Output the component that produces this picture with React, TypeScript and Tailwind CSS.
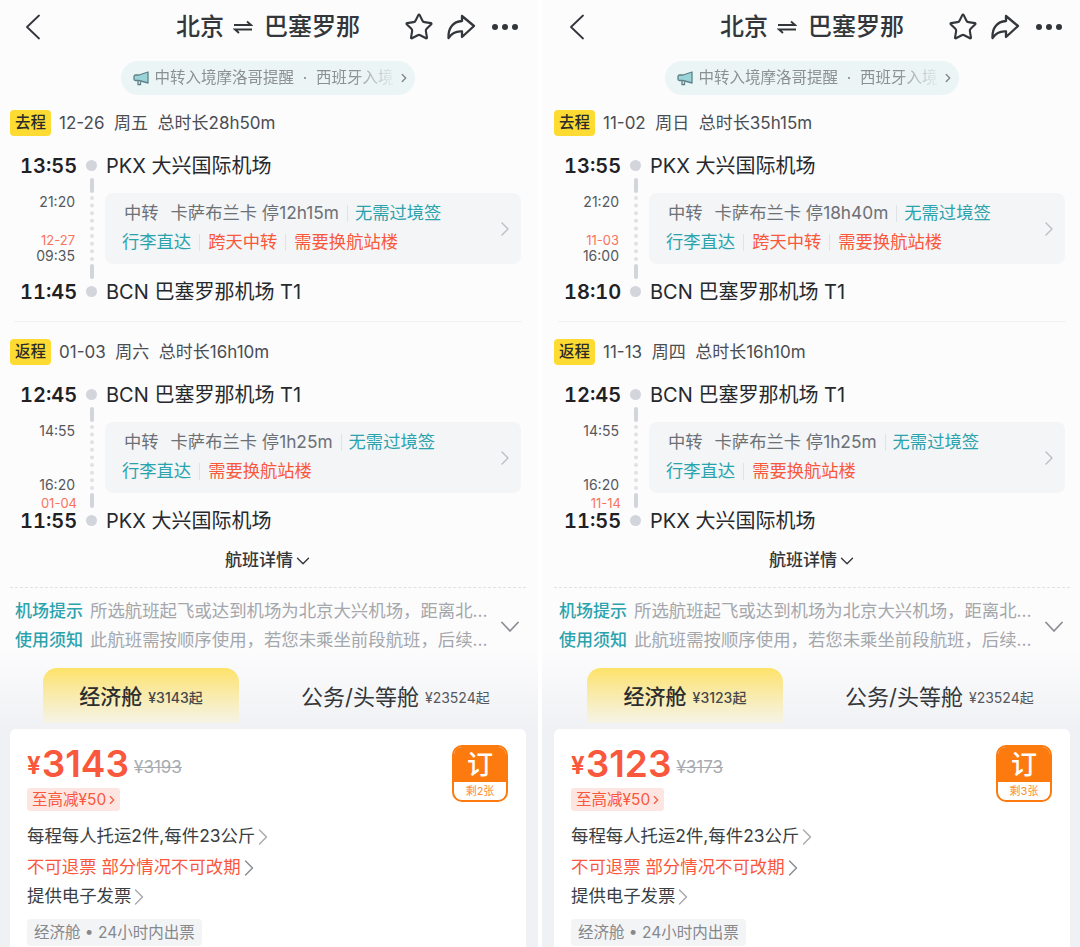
import React from 'react';
import { ChevronRight, ChevronDown, Star } from 'lucide-react';

const FONT = "font-['Inter','Noto_Sans_CJK_SC',sans-serif]";

type Tag = { text: string; color: 'teal' | 'red' };

type Leg = {
  label: string;
  head: string;
  depTime: string;
  depPort: string;
  arrTime: string;
  arrPort: string;
  land: string;
  landDate?: string;
  takeoff: string;
  takeoffDate?: string;
  stop: string;
  stopTag: string;
  tags: Tag[];
};

type PanelData = {
  legs: Leg[];
  econ: string;
  price: string;
  oldPrice: string;
  left: string;
};

const tagColor = { teal: 'text-[#2ba3ad]', red: 'text-[#f9583c]' };

function Divider() {
  return <span className="mx-[8px] h-[17px] w-px bg-[#e0e3e6]" />;
}

function LegBlock({ leg }: { leg: Leg }) {
  return (
    <div className="pl-[11px] pr-[15px]">
      <div className="flex h-[26px] items-center">
        <span className="-ml-px flex h-[26px] w-[41px] items-center justify-center rounded-[4px] bg-[#fedb33] text-[15.5px] font-medium text-[#2b2b2b]">
          {leg.label}
        </span>
        <span className="ml-[8px] whitespace-pre pt-[1px] text-[17px] text-[#4a4d52]">{leg.head}</span>
      </div>

      <div className="mt-[17px] flex h-[25px] items-center">
        <span className="w-[66px] pl-[9px] text-[20px] font-semibold leading-none tabular-nums text-[#1f2124]">{leg.depTime}</span>
        <span className="ml-[9px] h-[11px] w-[11px] rounded-full bg-[#d3d5dc]" />
        <span className="ml-[9px] text-[20px] leading-none text-[#27292c]">{leg.depPort}</span>
      </div>

      <div className="flex h-[101px]">
        <div className="w-[64px] text-right text-[14px] leading-[16px] text-[#55585c]">
          <div className="mt-[16px]">{leg.land}</div>
          {leg.takeoffDate ? (
            <div className="mt-[23px]">
              <div className="text-[13px] leading-[15px] text-[#f9735b]">{leg.takeoffDate}</div>
              <div>{leg.takeoff}</div>
            </div>
          ) : (
            <div className="mt-[38px]">
              <div>{leg.takeoff}</div>
              {leg.landDate && (
                <div className="-mr-[2px] mt-[5px] text-[13px] leading-[11px] text-[#f9735b]">{leg.landDate}</div>
              )}
            </div>
          )}
        </div>
        <div className="ml-[14px] flex w-[5px] flex-col items-center">
          <span className="h-[15px] w-[4px] rounded-full bg-[#d3d5dc]" />
          <span className="mt-[3px] h-[65px] border-l-[4px] border-dotted border-[#dfe1e5]" />
          <span className="mt-[3px] h-[15px] w-[4px] rounded-full bg-[#d3d5dc]" />
        </div>
        <div className="ml-[11px] mt-[15px] flex h-[71px] flex-1 items-center rounded-[8px] bg-[#f3f5f7] pl-[18px] pr-[4px]">
          <div className="flex-1 pb-[2px]">
            <div className="flex h-[28px] items-center text-[17.3px]">
              <span className="ml-[1px] text-[#6d7075]">中转</span>
              <span className="ml-[12px] text-[#6d7075]">{leg.stop}</span>
              <Divider />
              <span className="-ml-[1px] text-[#2ba3ad]">{leg.stopTag}</span>
            </div>
            <div className="-ml-[1px] mt-[1px] flex h-[28px] items-center text-[17.3px]">
              {leg.tags.map((t, i) => (
                <React.Fragment key={t.text}>
                  {i > 0 && <Divider />}
                  <span className={tagColor[t.color]}>{t.text}</span>
                </React.Fragment>
              ))}
            </div>
          </div>
          <ChevronRight className="h-[24px] w-[24px] text-[#b9bcc1]" strokeWidth={1.25} />
        </div>
      </div>

      <div className="flex h-[25px] items-center">
        <span className="w-[66px] pl-[9px] text-[20px] font-semibold leading-none tabular-nums text-[#1f2124]">{leg.arrTime}</span>
        <span className="ml-[9px] h-[11px] w-[11px] rounded-full bg-[#d3d5dc]" />
        <span className="ml-[9px] text-[20px] leading-none text-[#27292c]">{leg.arrPort}</span>
      </div>
    </div>
  );
}

function Panel({ data, side }: { data: PanelData; side: 'left' | 'right' }) {
  return (
    <div
      className={`h-[947px] w-[538px] shrink-0 overflow-hidden bg-[linear-gradient(to_bottom,#fcfcfd_650px,#f0f1f4_730px)] ${FONT} ${
        side === 'left' ? 'pr-[2px]' : 'pl-[2px]'
      }`}
    >
      {/* nav */}
      <div className="flex h-[54px] items-center pl-[25px]">
        <svg width="15" height="26" viewBox="0 0 15 26" fill="none" stroke="#33363a" strokeWidth="1.8" strokeLinecap="round" strokeLinejoin="round">
          <path d="M14 1.500 2 13l12 11.500" />
        </svg>
        <div className="ml-[136px] flex items-center text-[24px] font-medium text-[#33363a]">
          <span>北京</span>
          <svg className="ml-[9px] mr-[11px]" width="20" height="14" viewBox="0 0 20 14" fill="none" stroke="#33363a" strokeWidth="1.9">
            <path d="M1 5h17L14 1.500" />
            <path d="M19 9.500H2l4 3.500" />
          </svg>
          <span>巴塞罗那</span>
        </div>
        <Star className="ml-[44px] h-[30px] w-[30px] text-[#33363a]" strokeWidth={1.7} />
        <svg className="ml-[12px]" width="30" height="26" viewBox="0 0 30 26" fill="none" stroke="#33363a" strokeWidth="2.300" strokeLinejoin="round" strokeLinecap="round">
          <path d="M16 2 28 12 16 23v-5.500C10 17 6 19 2.500 24 2 14 7 7.500 16 7z" />
        </svg>
        <div className="ml-[16px] flex gap-[4px]">
          <span className="h-[6px] w-[6px] rounded-full bg-[#33363a]" />
          <span className="h-[6px] w-[6px] rounded-full bg-[#33363a]" />
          <span className="h-[6px] w-[6px] rounded-full bg-[#33363a]" />
        </div>
      </div>

      {/* notice */}
      <div className="mt-[7px] flex justify-center pr-[1px]">
        <div className="flex h-[34px] w-[294px] items-center overflow-hidden rounded-full bg-[#ebf5f6] pl-[12px] pr-[4px]">
          <svg className="shrink-0" width="17" height="17" viewBox="0 0 17 17" fill="none">
            <path d="M15 2v11L6 10.500H2.500A1.500 1.500 0 0 1 1 9V6.500A1.500 1.500 0 0 1 2.500 5H6z" fill="#9ad3d8" stroke="#5f8287" strokeWidth="1.300" strokeLinejoin="round" />
            <path d="M5 11v3.500h2.500V11.500" stroke="#5f8287" strokeWidth="1.300" />
          </svg>
          <span className="ml-[5px] flex-1 overflow-hidden whitespace-pre text-[15.500px] text-[#8c9093] [mask-image:linear-gradient(to_right,black_82%,transparent)]">
            中转入境摩洛哥提醒  ·  西班牙入境
          </span>
          <ChevronRight className="h-[14px] w-[14px] shrink-0 text-[#7f8487]" strokeWidth={2.25} />
        </div>
      </div>

      <div className="mt-[15px]">
        <LegBlock leg={data.legs[0]} />
      </div>
      <div className="mx-[14px] mt-[17px] h-px bg-[#f0f1f3]" />
      <div className="mt-[17px]">
        <LegBlock leg={data.legs[1]} />
      </div>

      {/* flight details */}
      <div className="mt-[17px] flex h-[22px] items-center justify-center pl-[3px] text-[17px] font-medium text-[#33363a]">
        航班详情
        <ChevronDown className="-ml-[1px] h-[22px] w-[22px]" strokeWidth={1.5} />
      </div>

      <div className="mx-[10px] mt-[15px] border-t border-dashed border-[#dfe1e4]" />

      {/* notes */}
      <div className="relative px-[15px] pt-[9px] text-[17px]">
        <div className="flex h-[29px] items-center whitespace-nowrap">
          <span className="font-medium text-[#2ba3ad]">机场提示</span>
          <span className="ml-[7px] text-[17.4px] text-[#a4a7ab]">所选航班起飞或达到机场为北京大兴机场，距离北…</span>
        </div>
        <div className="flex h-[29px] items-center whitespace-nowrap">
          <span className="font-medium text-[#2ba3ad]">使用须知</span>
          <span className="ml-[7px] text-[17.4px] text-[#a4a7ab]">此航班需按顺序使用，若您未乘坐前段航班，后续…</span>
        </div>
        <svg className="absolute right-[16px] top-[33px]" width="20" height="12" viewBox="0 0 20 12" fill="none" stroke="#8b8f94" strokeWidth="1.800" strokeLinecap="round" strokeLinejoin="round">
          <path d="M2 1.500 10 10l8-8.500" />
        </svg>
      </div>

      {/* cabin section */}
      <div className="mt-[2px] pt-[11px]">
        <div className="flex h-[55px] items-center">
          <div className="ml-[43px] flex h-[55px] w-[196px] items-center justify-center rounded-t-[14px] bg-gradient-to-b from-[#fde267] to-[#f5f3e6] pt-[3px]">
            <span className="text-[21px] font-medium text-[#2b2d30]">经济舱</span>
            <span className="ml-[6px] text-[14px] font-medium text-[#44474b]">{data.econ}</span>
          </div>
          <div className="ml-[62px] flex items-center pt-[3px]">
            <span className="text-[22px] text-[#33363a]">公务/头等舱</span>
            <span className="ml-[6px] text-[14px] text-[#55585c]">¥23524起</span>
          </div>
        </div>

        <div className="relative mx-[10px] mt-[6px] h-[300px] rounded-t-[6px] bg-white px-[17px] pt-[12px]">
          <div className="flex h-[44px] items-center">
            <span className="mt-[5px] text-[24px] font-bold leading-none text-[#f9583c]">¥</span>
            <span className="ml-[1px] text-[37px] font-semibold leading-none text-[#f9583c]">{data.price}</span>
            <span className="ml-[5px] mt-[10px] text-[17px] text-[#a8abaf] line-through">{data.oldPrice}</span>
          </div>
          <div className="mt-[3px] flex h-[23px] w-[93px] items-center whitespace-nowrap rounded-[3px] bg-[#fde6e2] pl-[5px] text-[15.5px] text-[#f9583c]">
            至高减¥50
            <ChevronRight className="-ml-[1px] h-[14px] w-[14px] shrink-0" strokeWidth={2} />
          </div>

          <div className="mt-[11px] flex h-[29px] items-center text-[17.4px] text-[#3a3d41]">
            每程每人托运2件,每件23公斤
            <ChevronRight className="-ml-[6px] h-[28px] w-[28px] text-[#a8abaf]" strokeWidth={1.25} />
          </div>
          <div className="mt-[2px] flex h-[29px] items-center text-[17.4px] text-[#f9583c]">
            不可退票 部分情况不可改期
            <ChevronRight className="-ml-[6px] h-[28px] w-[28px] text-[#8b8f94]" strokeWidth={1.25} />
          </div>
          <div className="flex h-[29px] items-center text-[17.4px] text-[#3a3d41]">
            提供电子发票
            <ChevronRight className="-ml-[6px] h-[28px] w-[28px] text-[#a8abaf]" strokeWidth={1.25} />
          </div>
          <div className="mt-[8px] inline-flex h-[27px] items-center rounded-[4px] bg-[#f3f4f6] px-[7px] text-[15.5px] text-[#85888c]">
            经济舱 • 24小时内出票
          </div>

          {/* book button */}
          <div className="absolute right-[18px] top-[16px] w-[56px] overflow-hidden rounded-[10px] border-2 border-[#fd7a0f] bg-white">
            <div className="flex h-[35px] items-center justify-center bg-[#fd7a0f] text-[26px] font-medium text-white">订</div>
            <div className="flex h-[18px] items-center justify-center text-[11px] text-[#fd8c33]">{data.left}</div>
          </div>
        </div>
      </div>
    </div>
  );
}

const PANELS: PanelData[] = [
  {
    legs: [
      {
        label: '去程', head: '12-26  周五  总时长28h50m',
        depTime: '13:55', depPort: 'PKX 大兴国际机场', arrTime: '11:45', arrPort: 'BCN 巴塞罗那机场 T1',
        land: '21:20', takeoff: '09:35', takeoffDate: '12-27',
        stop: '卡萨布兰卡 停12h15m', stopTag: '无需过境签',
        tags: [{ text: '行李直达', color: 'teal' }, { text: '跨天中转', color: 'red' }, { text: '需要换航站楼', color: 'red' }],
      },
      {
        label: '返程', head: '01-03  周六  总时长16h10m',
        depTime: '12:45', depPort: 'BCN 巴塞罗那机场 T1', arrTime: '11:55', arrPort: 'PKX 大兴国际机场',
        land: '14:55', takeoff: '16:20', landDate: '01-04',
        stop: '卡萨布兰卡 停1h25m', stopTag: '无需过境签',
        tags: [{ text: '行李直达', color: 'teal' }, { text: '需要换航站楼', color: 'red' }],
      },
    ],
    econ: '¥3143起', price: '3143', oldPrice: '¥3193', left: '剩2张',
  },
  {
    legs: [
      {
        label: '去程', head: '11-02  周日  总时长35h15m',
        depTime: '13:55', depPort: 'PKX 大兴国际机场', arrTime: '18:10', arrPort: 'BCN 巴塞罗那机场 T1',
        land: '21:20', takeoff: '16:00', takeoffDate: '11-03',
        stop: '卡萨布兰卡 停18h40m', stopTag: '无需过境签',
        tags: [{ text: '行李直达', color: 'teal' }, { text: '跨天中转', color: 'red' }, { text: '需要换航站楼', color: 'red' }],
      },
      {
        label: '返程', head: '11-13  周四  总时长16h10m',
        depTime: '12:45', depPort: 'BCN 巴塞罗那机场 T1', arrTime: '11:55', arrPort: 'PKX 大兴国际机场',
        land: '14:55', takeoff: '16:20', landDate: '11-14',
        stop: '卡萨布兰卡 停1h25m', stopTag: '无需过境签',
        tags: [{ text: '行李直达', color: 'teal' }, { text: '需要换航站楼', color: 'red' }],
      },
    ],
    econ: '¥3123起', price: '3123', oldPrice: '¥3173', left: '剩3张',
  },
];

export default function App() {
  return (
    <div className="flex h-[947px] w-[1080px] gap-[4px] overflow-hidden bg-white">
      <Panel data={PANELS[0]} side="left" />
      <Panel data={PANELS[1]} side="right" />
    </div>
  );
}
